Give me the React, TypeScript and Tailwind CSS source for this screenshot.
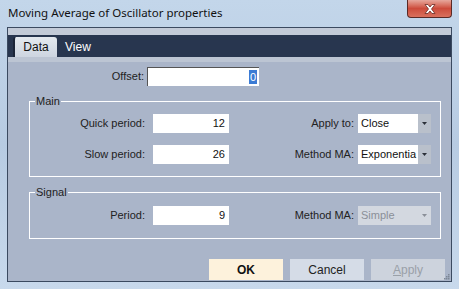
import React from "react";

const font = { fontFamily: '"Liberation Sans", Arial, sans-serif' };

function Field({ value, className = "" }: { value: string; className?: string }) {
  return (
    <div className={`h-[19px] w-[76px] bg-white text-right pr-[4px] leading-[19px] text-[11px] text-[#111] ${className}`}>
      {value}
    </div>
  );
}

function Select({ value, disabled }: { value: string; disabled?: boolean }) {
  return (
    <div
      className={`flex h-[19px] w-[73px] items-stretch ${disabled ? "bg-[#d3d8e0]" : "bg-white"}`}
    >
      <span
        className={`flex-1 overflow-hidden whitespace-nowrap pl-[3px] leading-[19px] text-[11px] ${
          disabled ? "text-[#8a8f98]" : "text-[#111]"
        }`}
      >
        {value}
      </span>
      <span
        className={`flex w-[13px] items-center justify-center ${
          disabled ? "bg-[#d3d8e0]" : "bg-[#b9c0cb]"
        }`}
      >
        <svg width="5" height="3" viewBox="0 0 5 3">
          <path d="M0 0h5L2.5 3z" fill={disabled ? "#8a8f98" : "#2a2f38"} />
        </svg>
      </span>
    </div>
  );
}

function Row({ label, value, right, rightValue, disabled }: { label: string; value: string; right: string; rightValue: string; disabled?: boolean }) {
  return (
    <div className="flex h-[19px] items-center">
      <span className="w-[115px] text-right text-[11px] text-[#222]">{label}</span>
      <Field value={value} className="ml-[8px]" />
      <span className="flex-1 text-right text-[11px] text-[#222]">{right}</span>
      <div className="ml-[4px] mr-[9px]">
        <Select value={rightValue} disabled={disabled} />
      </div>
    </div>
  );
}

export default function App() {
  return (
    <div
      className="flex h-[289px] w-[459px] flex-col overflow-hidden bg-gradient-to-b from-[#c3d6ea] via-[#b7cbe2] to-[#c8d9ec]"
      style={font}
    >
      {/* title bar */}
      <div className="relative flex h-[27px] items-start">
        <span
          className="pl-[8px] pt-[4px] text-[11.5px] text-[#111]"
          style={{ fontFamily: '"Noto Sans", "Open Sans", sans-serif' }}
        >
          Moving Average of Oscillator properties
        </span>
        <div className="absolute right-[7px] top-0 flex h-[18px] w-[45px] items-center justify-center rounded-b-[4px] border border-t-0 border-[#5a2a26] bg-gradient-to-b from-[#e6a79c] via-[#cc4b3b] to-[#d9705d]">
          <svg width="12" height="10" viewBox="0 0 12 10">
            <path d="M1 0.5h3l2 2.5 2-2.5h3l-3.5 4.5 3.5 4.5h-3l-2-2.5-2 2.5h-3l3.5-4.5z" fill="#fff" stroke="#6b2a22" strokeWidth="0.8" />
          </svg>
        </div>
      </div>

      <div className="flex flex-1 px-[7px] pb-[7px]">
        <div className="relative flex flex-1 flex-col border border-[#3b4a60] bg-[#aab5c9]">
          <div className="h-[7px] bg-[#c3cbd8]" />
          {/* tab strip */}
          <div className="flex h-[22px] items-end bg-[#28364f] pl-[5px]">
            <div className="flex h-[20px] w-[44px] items-center justify-center rounded-t-[3px] border-l-2 border-[#1b2538] bg-gradient-to-b from-[#e4e9ef] to-[#cdd5e0] text-[12px] text-[#111]">
              Data
            </div>
            <div className="flex h-[20px] items-center pl-[8px] text-[12px] text-white">View</div>
          </div>
          <div className="h-[5px] bg-[#bcc5d3]" />

          {/* offset */}
          <div className="mt-[5px] flex h-[19px] items-center">
            <span className="w-[136px] text-right text-[11px] text-[#222]">Offset:</span>
            <div className="ml-[3px] flex h-[19px] w-[112px] items-center justify-end border-l border-t border-[#555] bg-white pr-[2px]">
              <span className="bg-[#3b7bd4] px-[1px] text-[11px] leading-[14px] text-white">0</span>
            </div>
          </div>

          {/* main */}
          <fieldset className="ml-[21px] mr-[10px] mt-[9px] h-[82px] border border-white px-0 pt-[7px]">
            <legend className="ml-[5px] px-[1px] text-[11px] leading-[12px] text-[#222]">Main</legend>
            <div className="flex flex-col gap-[12px]">
              <Row label="Quick period:" value="12" right="Apply to:" rightValue="Close" />
              <Row label="Slow period:" value="26" right="Method MA:" rightValue="Exponentia" />
            </div>
          </fieldset>

          {/* signal */}
          <fieldset className="ml-[21px] mr-[10px] mt-[9px] h-[53px] border border-white px-0 pt-[8px]">
            <legend className="ml-[5px] px-[1px] text-[11px] leading-[12px] text-[#222]">Signal</legend>
            <Row label="Period:" value="9" right="Method MA:" rightValue="Simple" disabled />
          </fieldset>

          {/* buttons */}
          <div className="mt-auto mb-[1px] flex justify-end gap-[7px] pr-[6px]">
            <button className="h-[21px] w-[74px] bg-[#fdf2dc] text-[12px] font-bold text-[#111]">OK</button>
            <button className="h-[21px] w-[74px] bg-[#d5dce7] text-[12px] text-[#222]">Cancel</button>
            <button className="h-[21px] w-[74px] bg-[#cdd3dd] text-[12px] text-[#9aa0a8]">
              <span className="underline">A</span>pply
            </button>
          </div>
          <svg className="absolute bottom-[1px] right-[1px]" width="6" height="6" viewBox="0 0 6 6">
            <g fill="#7d8796">
              <rect x="4" y="0" width="1.5" height="1.5" />
              <rect x="2" y="2" width="1.5" height="1.5" />
              <rect x="4" y="2" width="1.5" height="1.5" />
              <rect x="0" y="4" width="1.5" height="1.5" />
              <rect x="2" y="4" width="1.5" height="1.5" />
              <rect x="4" y="4" width="1.5" height="1.5" />
            </g>
          </svg>
        </div>
      </div>
    </div>
  );
}
